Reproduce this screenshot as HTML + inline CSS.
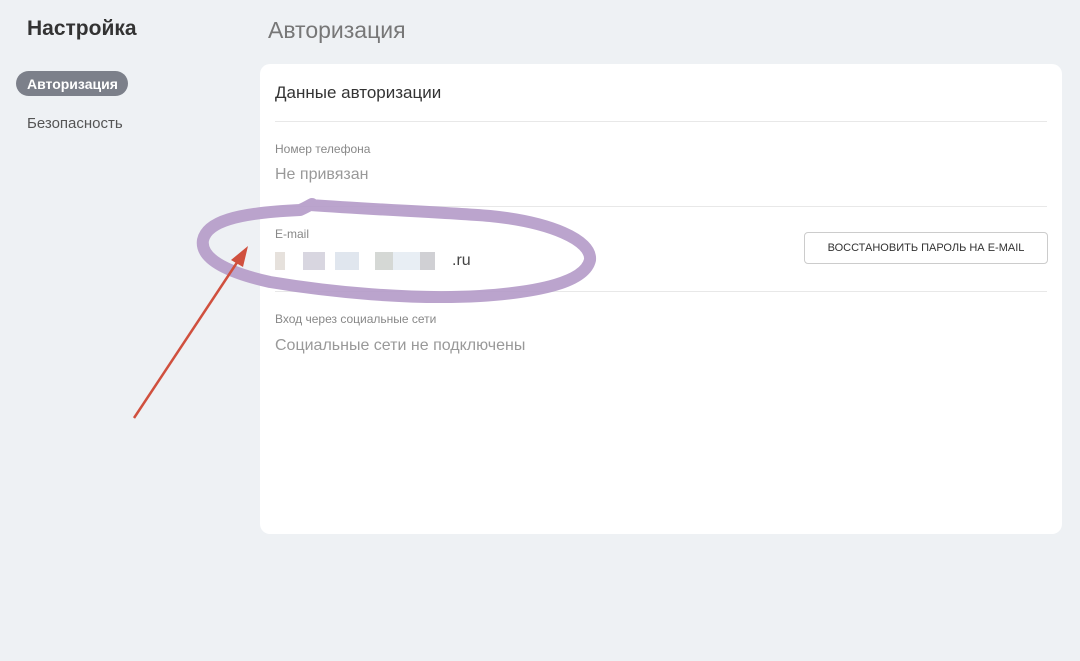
<!DOCTYPE html>
<html><head><meta charset="utf-8"><style>
body{margin:0;width:1080px;height:661px;background:#eef1f4;font-family:"Liberation Sans","DejaVu Sans",sans-serif;position:relative;overflow:hidden}
.a{position:absolute;white-space:nowrap}
</style></head><body>
<div class="a" style="left:27px;top:17px;font-size:21px;font-weight:bold;color:#333">Настройка</div>
<div class="a" style="left:16px;top:71px;width:112px;height:25px;border-radius:13px;background:#7c808a"></div>
<div class="a" style="left:27px;top:76px;font-size:14px;font-weight:bold;color:#fff">Авторизация</div>
<div class="a" style="left:27px;top:115px;font-size:15px;color:#555">Безопасность</div>
<div class="a" style="left:268px;top:17px;font-size:23px;color:#777">Авторизация</div>
<div class="a" style="left:260px;top:64px;width:802px;height:470px;background:#fff;border-radius:10px"></div>
<div class="a" style="left:275px;top:83px;font-size:17px;color:#333">Данные авторизации</div>
<div class="a" style="left:275px;top:121px;width:772px;height:1px;background:#e8e8e8"></div>
<div class="a" style="left:275px;top:142px;font-size:12px;color:#888">Номер телефона</div>
<div class="a" style="left:275px;top:166px;font-size:16px;color:#999">Не привязан</div>
<div class="a" style="left:275px;top:206px;width:772px;height:1px;background:#e8e8e8"></div>
<div class="a" style="left:275px;top:227px;font-size:12px;color:#888">E-mail</div>
<div class="a" style="left:275px;top:252px;width:170px;height:18px;background:linear-gradient(90deg,#e6e1dc 0 10px,#fff 10px 28px,#d8d6e0 28px 50px,#fff 50px 60px,#e0e6ee 60px 84px,#fff 84px 100px,#d5d8d5 100px 118px,#e8eef4 118px 145px,#d0d0d4 145px 160px,#fff 160px)"></div>
<div class="a" style="left:452px;top:252px;font-size:16px;color:#444">.ru</div>
<div class="a" style="left:804px;top:232px;width:242px;height:30px;border:1px solid #ccc;border-radius:4px;font-size:11px;color:#333;text-align:center;line-height:30px">ВОССТАНОВИТЬ ПАРОЛЬ НА E-MAIL</div>
<div class="a" style="left:275px;top:291px;width:772px;height:1px;background:#e8e8e8"></div>
<div class="a" style="left:275px;top:312px;font-size:12px;color:#888">Вход через социальные сети</div>
<div class="a" style="left:275px;top:337px;font-size:16px;color:#999">Социальные сети не подключены</div>
<svg class="a" style="left:0;top:0" width="1080" height="661">
<path d="M310 205 C 380 210,440 212,490 216 C 550 222,592 240,590 260 C 585 282,540 292,480 296 C 410 300,330 292,270 282 C 225 272,200 258,203 240 C 207 222,235 213,300 210 C 305 208,308 206,312 204" fill="none" stroke="#b49ac8" stroke-width="12" stroke-linecap="round" stroke-linejoin="round" opacity="0.9"/>
<line x1="134" y1="418" x2="240" y2="258" stroke="#d0503e" stroke-width="2.5"/>
<polygon points="248,246 231,260 243,267" fill="#d0503e"/>
</svg>
</body></html>
